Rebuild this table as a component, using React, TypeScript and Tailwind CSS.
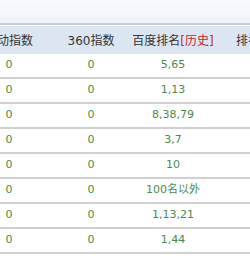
const rows = [
  ["0", "0", "5,65"],
  ["0", "0", "1,13"],
  ["0", "0", "8,38,79"],
  ["0", "0", "3,7"],
  ["0", "0", "10"],
  ["0", "0", "100名以外"],
  ["0", "0", "1,13,21"],
  ["0", "0", "1,44"],
]

export default function App() {
  return (
    <div className="w-[250px] h-[261px] overflow-hidden bg-white font-['DejaVu_Sans','Noto_Sans_CJK_SC',sans-serif]">
      <div className="h-[25px] bg-gradient-to-b from-[#f8fafd] to-[#eef2f8] border-b-2 border-[#c9ccd0]" />
      <div className="w-[328px] -ml-[32px] border-t border-white">
        <div className="grid grid-cols-[82px_82px_82px_82px] h-[28px] pt-[2px] items-center bg-[#dce6f3] text-[12px] text-[#333] text-center">
          <div>活动指数</div>
          <div>360指数</div>
          <div>
            百度排名<span className="text-[#c8242b]">[历史]</span>
          </div>
          <div className="text-left pl-[22px]">排名变化</div>
        </div>
        {rows.map((r, i) => (
          <div
            key={i}
            className="grid grid-cols-[82px_82px_82px_82px] h-[25px] items-center border-b-2 border-[#d0d0d0] text-[11px] text-[#4b8a4b] text-center"
          >
            <div>{r[0]}</div>
            <div>{r[1]}</div>
            <div>{r[2]}</div>
            <div />
          </div>
        ))}
      </div>
    </div>
  )
}
